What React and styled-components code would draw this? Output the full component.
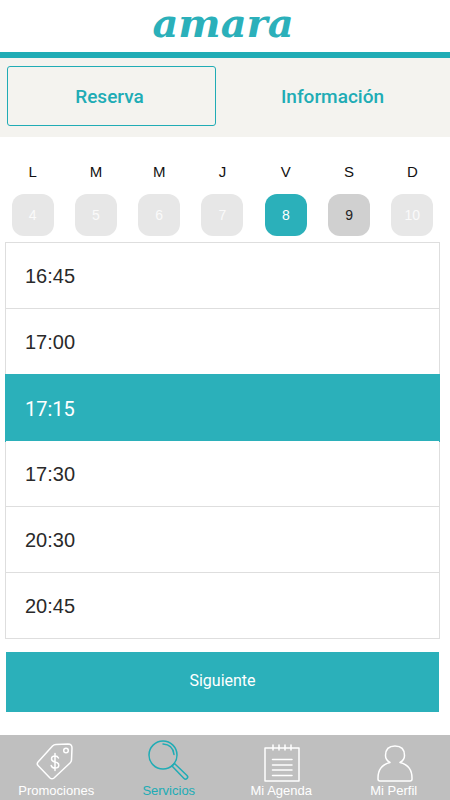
import React, { useState } from "react";
import styled, { createGlobalStyle } from "styled-components";

const days = [
  { letter: "L", number: 4, disabled: true },
  { letter: "M", number: 5, disabled: true },
  { letter: "M", number: 6, disabled: true },
  { letter: "J", number: 7, disabled: true },
  { letter: "V", number: 8 },
  { letter: "S", number: 9 },
  { letter: "D", number: 10, disabled: true },
];

const hours = ["16:45", "17:00", "17:15", "17:30", "20:30", "20:45"];

const sections = [
  { name: "Promociones", icon: <TagIcon /> },
  { name: "Servicios", icon: <SearchIcon /> },
  { name: "Mi Agenda", icon: <AgendaIcon /> },
  { name: "Mi Perfil", icon: <ProfileIcon /> },
];

function App() {
  const [tab, setTab] = useState("Reserva");
  const [day, setDay] = useState(8);
  const [hour, setHour] = useState("17:15");

  return (
    <Page>
      <GlobalStyle />
      <Header>
        <Logo>amara</Logo>
      </Header>
      <Tabs>
        {["Reserva", "Información"].map((name) => (
          <Tab
            key={name}
            type="button"
            $active={tab === name}
            onClick={() => setTab(name)}
          >
            {name}
          </Tab>
        ))}
      </Tabs>
      <Main>
        <Week>
          {days.map((d) => (
            <Day key={d.number}>
              <DayLetter>{d.letter}</DayLetter>
              <DayButton
                type="button"
                disabled={d.disabled}
                $active={day === d.number}
                onClick={() => setDay(d.number)}
              >
                {d.number}
              </DayButton>
            </Day>
          ))}
        </Week>
        <HourList>
          {hours.map((h) => (
            <li key={h}>
              <HourButton
                type="button"
                $active={hour === h}
                onClick={() => setHour(h)}
              >
                {h}
              </HourButton>
            </li>
          ))}
        </HourList>
        <Actions>
          <NextButton type="button">Siguiente</NextButton>
        </Actions>
      </Main>
      <Footer>
        {sections.map((s) => (
          <FooterLink key={s.name} href="#" $active={s.name === "Servicios"}>
            {s.icon}
            <span>{s.name}</span>
          </FooterLink>
        ))}
      </Footer>
    </Page>
  );
}

export default App;

function TagIcon() {
  return (
    <Icon viewBox="0 0 44 44">
      <path d="M22 5.500 L34 5 Q38 5 38 9 L37.500 21 Q37.500 22.500 36 24 L20 39 Q18 40.500 16 39 L4 26.500 Q2.500 25 4 23 L18.500 7 Q20 5.600 22 5.500 Z" />
      <circle cx="32" cy="11.500" r="2.300" />
      <path d="M24.500 19 Q23.500 17 21 17 Q17.500 17 17.500 20 Q17.500 22.300 21 22.900 Q24.800 23.500 24.800 26.200 Q24.800 29 21 29 Q17.800 29 17.200 26.500 M21 14.500 V31.500" />
    </Icon>
  );
}

function SearchIcon() {
  return (
    <Icon viewBox="0 0 44 44">
      <circle cx="16" cy="16" r="14" />
      <path d="M16 5 Q26 5.500 27 15.500" />
      <path d="M25 27 L37 39.500 Q38.500 41 40 39.500 Q41.500 38 40 36.500 L27.500 24.500 Z" />
    </Icon>
  );
}

function AgendaIcon() {
  return (
    <Icon viewBox="0 0 44 44">
      <path d="M6 9 H40 V42 H6 Z" />
      <path d="M14 6 V11 M20 6 V11 M26 6 V11 M32 6 V11" />
      <path d="M13.500 20.500 H33 M13.500 26 H33 M13.500 31 H33 M13.500 36.500 H33" />
    </Icon>
  );
}

function ProfileIcon() {
  return (
    <Icon viewBox="0 0 44 44">
      <path d="M18 23.500 Q13.500 21 13.500 16.500 Q13.500 7 23 7 Q32.500 7 32.500 16.500 Q32.500 21 28 23.500 Q40 26.500 40 39 V40 Q40 42 38 42 H8 Q6 42 6 40 V39 Q6 26.500 18 23.500 Z" />
    </Icon>
  );
}

const GlobalStyle = createGlobalStyle`
  * {
    box-sizing: border-box;
  }

  body {
    margin: 0;
    background: #fff;
    font-family: Roboto, sans-serif;
  }

  button {
    font-family: inherit;
    cursor: pointer;
  }
`;

const Page = styled.div`
  display: flex;
  flex-direction: column;
  min-height: 100vh;
`;

const Header = styled.header`
  display: flex;
  justify-content: center;
  height: 58px;
  padding-right: 4px;
  border-bottom: 6px solid #20acb5;
`;

const Logo = styled.h1`
  margin: 0;
  color: #2bb0ba;
  font-family: "DejaVu Serif", serif;
  font-size: 40px;
  font-style: italic;
  font-weight: bold;
  line-height: 46px;
`;

const Tabs = styled.nav`
  display: grid;
  grid-template-columns: 1fr 1fr;
  gap: 14px;
  padding: 8px 11px 11px 7px;
  background: #f4f3ef;
`;

const Tab = styled.button`
  height: 60px;
  padding: 0 8px 0 4px;
  border: 1px solid ${(props) => (props.$active ? "#20acb5" : "transparent")};
  border-radius: 3px;
  background: transparent;
  color: #20acb5;
  font-size: 19px;
  font-weight: 500;
`;

const Main = styled.main`
  flex: 1;
  padding: 26px 10px 23px 5px;
`;

const Week = styled.div`
  display: grid;
  grid-template-columns: repeat(7, 1fr);
  margin: 0 -4px;
`;

const Day = styled.div`
  display: flex;
  flex-direction: column;
  align-items: center;
  gap: 13px;
  font-family: "Liberation Sans", sans-serif;
`;

const DayLetter = styled.span`
  color: #111;
  font-size: 15px;
  line-height: 18px;
`;

const DayButton = styled.button`
  width: 42px;
  height: 42px;
  padding: 0;
  border: none;
  border-radius: 12px;
  background: ${(props) => (props.$active ? "#2bb0ba" : "#d0d0d0")};
  color: ${(props) => (props.$active ? "#fff" : "#222")};
  font-size: 14px;

  &:disabled {
    background: #e7e7e7;
    color: #fafafa;
    cursor: default;
  }
`;

const HourList = styled.ul`
  margin: 6px 0 0;
  padding: 0;
  border: 1px solid #dedede;
  border-bottom: none;
  list-style: none;
`;

const HourButton = styled.button`
  display: block;
  width: 100%;
  height: 66px;
  padding: 2px 19px 0;
  border: none;
  border-bottom: 1px solid #dedede;
  background: ${(props) => (props.$active ? "#2bb0ba" : "#fff")};
  box-shadow: ${(props) => (props.$active ? "0 0 0 1px #2bb0ba" : "none")};
  color: ${(props) => (props.$active ? "#fff" : "#2a2a2a")};
  font-family: ${(props) =>
    props.$active ? "Roboto" : '"Liberation Sans"'}, sans-serif;
  font-size: 20px;
  text-align: left;
  ${(props) => props.$active && "border-color: #2bb0ba;"}
`;

const Actions = styled.div`
  padding: 13px 1px 0;
`;

const NextButton = styled.button`
  display: block;
  width: 100%;
  height: 60px;
  padding: 0 0 4px;
  border: none;
  background: #2bb0ba;
  color: #fff;
  font-size: 16px;
`;

const Footer = styled.footer`
  display: grid;
  grid-template-columns: repeat(4, 1fr);
  height: 65px;
  background: #bfbfbf;
`;

const FooterLink = styled.a`
  display: flex;
  flex-direction: column;
  align-items: center;
  padding-top: 4px;
  color: ${(props) => (props.$active ? "#20acb5" : "#fff")};
  font-family: "Liberation Sans", sans-serif;
  font-size: 13px;
  line-height: 16px;
  text-decoration: none;
`;

const Icon = styled.svg`
  width: 44px;
  height: 44px;
  fill: none;
  stroke: currentColor;
  stroke-width: 1.5;
  stroke-linecap: round;
  stroke-linejoin: round;
`;
